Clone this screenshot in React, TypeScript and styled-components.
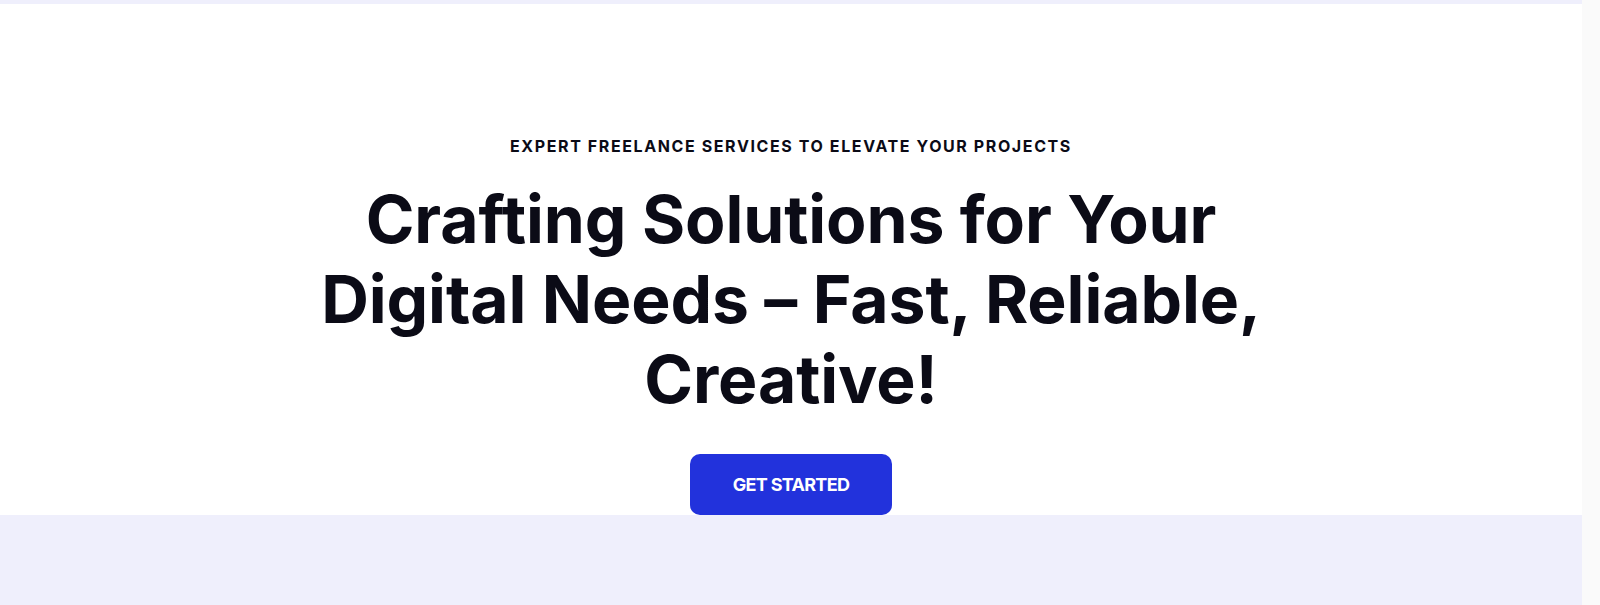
import styled, { createGlobalStyle } from "styled-components";

const GlobalStyle = createGlobalStyle`
  html, body {
    margin: 0;
    padding: 0;
    background: #ffffff;
  }
  body {
    font-family: Inter, "Noto Sans", sans-serif;
    -webkit-font-smoothing: antialiased;
  }
  * {
    box-sizing: border-box;
  }
`;

const Page = styled.div`
  display: flex;
  height: 605px;
  overflow: hidden;
`;

const Main = styled.main`
  flex: 1;
  display: flex;
  flex-direction: column;
  background: #efeffc;
`;

const Gutter = styled.div`
  width: 18px;
  background: #fafafa;
`;

const Hero = styled.section`
  margin-top: 4px;
  background: #ffffff;
  display: flex;
  flex-direction: column;
  align-items: center;
  padding-top: 130px;
  text-align: center;
`;

const Eyebrow = styled.p`
  margin: 0;
  font-size: 16px;
  line-height: 24px;
  font-weight: 700;
  letter-spacing: 1.6px;
  text-transform: uppercase;
  color: #0b0b16;
`;

const Title = styled.h1`
  margin: 21px 0 0;
  max-width: 960px;
  font-size: 66px;
  line-height: 80px;
  font-weight: 700;
  letter-spacing: -0.1px;
  color: #0b0b16;
`;

const CtaButton = styled.button`
  margin-top: 35px;
  width: 202px;
  height: 61px;
  border: none;
  border-radius: 10px;
  background: #2232dc;
  color: #ffffff;
  font-family: Inter, "Noto Sans", sans-serif;
  font-size: 18px;
  font-weight: 700;
  letter-spacing: -0.7px;
  text-transform: uppercase;
  cursor: pointer;
`;

export default function App() {
  return (
    <>
      <GlobalStyle />
      <Page>
        <Main>
          <Hero>
            <Eyebrow>Expert freelance services to elevate your projects</Eyebrow>
            <Title>Crafting Solutions for Your Digital Needs – Fast, Reliable, Creative!</Title>
            <CtaButton>Get started</CtaButton>
          </Hero>
        </Main>
        <Gutter />
      </Page>
    </>
  );
}
